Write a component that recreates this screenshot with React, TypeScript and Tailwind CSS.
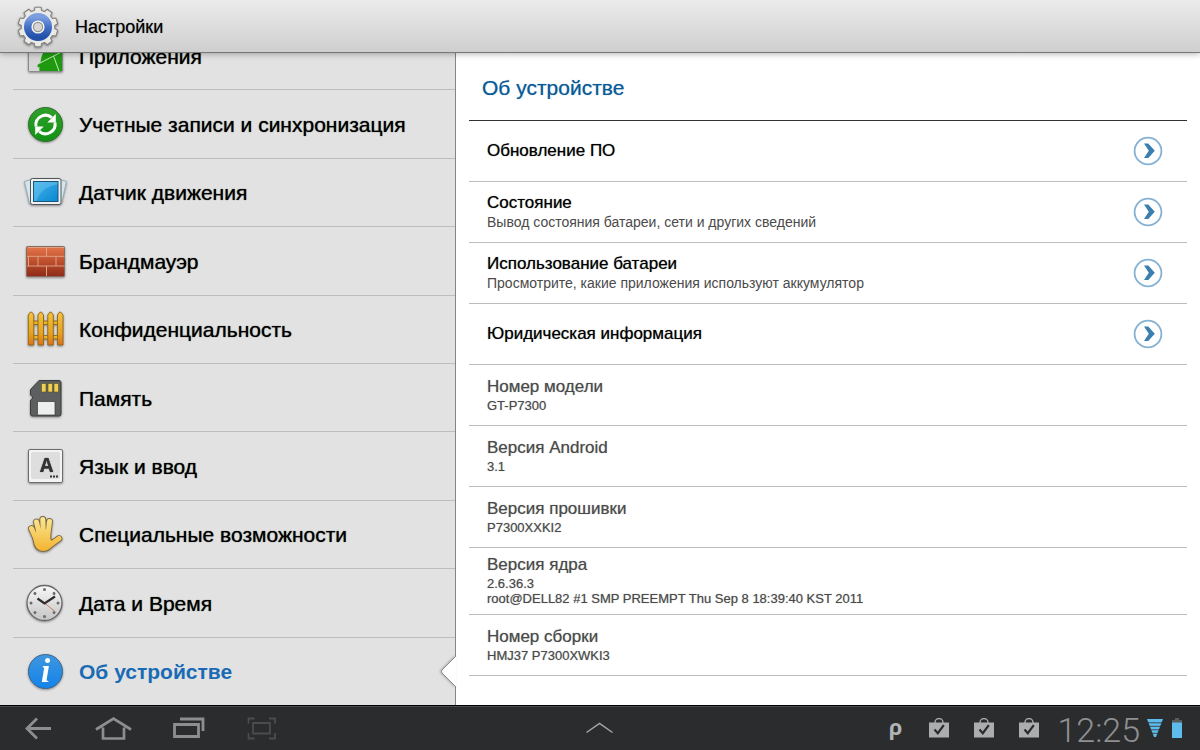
import React from "react";
import clsx from "clsx";

const GEAR_TEETH = 10;

const gearPath = () => {
  const points: string[] = [];
  for (let i = 0; i < GEAR_TEETH; i++) {
    const a = ((i * 360) / GEAR_TEETH - 90) * (Math.PI / 180);
    const corners: [number, number][] = [
      [-0.22, 16.8],
      [-0.15, 20],
      [0.15, 20],
      [0.22, 16.8],
    ];
    corners.forEach(([offset, r]) => {
      points.push(
        `${(22 + r * Math.cos(a + offset)).toFixed(2)},${(22 + r * Math.sin(a + offset)).toFixed(2)}`
      );
    });
  }
  return `M${points.join("L")}Z`;
};

const IconBox = ({ children }: { children: React.ReactNode }) => (
  <svg
    viewBox="0 0 44 44"
    className="h-11 w-11 shrink-0 drop-shadow-[0_1px_1px_rgba(0,0,0,0.4)]"
    aria-hidden="true"
  >
    {children}
  </svg>
);

const GearIcon = () => (
  <IconBox>
    <defs>
      <linearGradient id="gearBlue" x1="0" y1="0" x2="0" y2="1">
        <stop offset="0" stopColor="#7d9fe0" />
        <stop offset="0.5" stopColor="#4470c6" />
        <stop offset="1" stopColor="#2350a8" />
      </linearGradient>
    </defs>
    <path d={gearPath()} fill="#e9e9e6" stroke="#84827e" strokeWidth="1.1" strokeLinejoin="round" />
    <circle cx="22" cy="22" r="10" fill="none" stroke="url(#gearBlue)" strokeWidth="8" />
    <circle cx="22" cy="22" r="5.8" fill="#dcdcda" stroke="#f8f8f6" strokeWidth="1.6" />
    <circle cx="22" cy="22" r="4.6" fill="#d6d6d6" stroke="#97958f" strokeWidth="1.2" />
  </IconBox>
);

const AppsIcon = () => (
  <IconBox>
    <rect x="5.5" y="3.5" width="34" height="34" rx="1" fill="#d6d6d6" stroke="#8a8a8a" />
    <path
      d="M16.5 37c-.3-1.5-.3-3 0-4.300-1.500 1.500-3-.5-1.500-2.200l2.500-1.500c.5-8 4-14.500 10-17.500 4-1.500 8.500-1.500 11.500 1V37z"
      fill="#1f9a10"
    />
    <path d="M17 29 38.500 18M30.500 22 36 37" stroke="#c4ecb4" strokeWidth="1" fill="none" />
  </IconBox>
);

const SyncIcon = () => (
  <IconBox>
    <defs>
      <linearGradient id="syncGreen" x1="0" y1="0" x2="0" y2="1">
        <stop offset="0" stopColor="#2fa02b" />
        <stop offset="1" stopColor="#119312" />
      </linearGradient>
    </defs>
    <circle cx="22.500" cy="22.500" r="17" fill="url(#syncGreen)" stroke="#2f6f2d" />
    <path
      d="M13 24.500a9.600 9.600 0 0 1 15.800-8.800M32 20.500a9.600 9.600 0 0 1-15.800 8.800"
      fill="none"
      stroke="#fff"
      strokeWidth="3"
    />
    <path d="M32.800 12v8.500h-8.500zM12.200 33v-8.500h8.500z" fill="#fff" />
  </IconBox>
);

const MotionIcon = () => (
  <IconBox>
    <defs>
      <linearGradient id="screenBlue" x1="0" y1="0" x2="1" y2="1">
        <stop offset="0" stopColor="#48b5ea" />
        <stop offset="1" stopColor="#0787d2" />
      </linearGradient>
    </defs>
    <path d="M1.500 11.500 9 9.500v24.500l-2.500-.5z" fill="#d3e6ef" stroke="#8fa5b0" strokeWidth="0.8" />
    <path d="M43.500 11.500 36 9.500v24.500l2.500-.5z" fill="#d3e6ef" stroke="#8fa5b0" strokeWidth="0.8" />
    <rect x="7.500" y="8.500" width="30.500" height="26" rx="2" fill="#eef0f1" stroke="#4f5558" />
    <rect x="10.500" y="11.500" width="24.500" height="20" fill="url(#screenBlue)" stroke="#1b5479" />
    <path d="M11 12h23.500v2.500c-11 1.500-18 7-21 16.500H11z" fill="#7bcbf3" opacity="0.4" />
  </IconBox>
);

const FirewallIcon = () => (
  <IconBox>
    <defs>
      <linearGradient id="brick" x1="0" y1="0" x2="0" y2="1">
        <stop offset="0" stopColor="#e5764b" />
        <stop offset="0.5" stopColor="#bd4f2d" />
        <stop offset="1" stopColor="#8d2a18" />
      </linearGradient>
    </defs>
    <rect x="3.500" y="7.500" width="38" height="30" rx="1" fill="url(#brick)" stroke="#8a6a5c" />
    <path
      d="M4 17.300h37.500M4 27h37.500M23.500 8v9M5.500 17.500V27M15 17.500V27M33 17.500V27M23.500 27v10M5 8.500h36"
      stroke="#dfa084"
      strokeWidth="1"
    />
  </IconBox>
);

const FenceIcon = () => (
  <IconBox>
    <defs>
      <linearGradient id="fence" x1="0" y1="0" x2="0" y2="1">
        <stop offset="0" stopColor="#f3c43a" />
        <stop offset="0.65" stopColor="#e5a11f" />
        <stop offset="1" stopColor="#dc7317" />
      </linearGradient>
    </defs>
    <rect x="6" y="14" width="33" height="3.500" fill="#e8b52b" stroke="#7b6114" strokeWidth="0.800" />
    <rect x="6" y="28.500" width="33" height="3.500" fill="#e8b52b" stroke="#7b6114" strokeWidth="0.800" />
    {[5.3, 15, 24.8, 34.5].map((x) => (
      <path
        key={x}
        transform={`translate(${x} 0)`}
        d="M0 8 2 5.200h1.500L5.500 8v30H0z"
        fill="url(#fence)"
        stroke="#94641b"
        strokeWidth="0.900"
        strokeLinejoin="round"
      />
    ))}
  </IconBox>
);

const MemoryIcon = () => (
  <IconBox>
    <path
      d="M16 4.500h20a2 2 0 0 1 2 2V38a2 2 0 0 1-2 2H9.500a2 2 0 0 1-2-2V24l2-1.500v-2l-2-1.500v-5.500z"
      fill="#5d5e60"
      stroke="#3c3d3f"
    />
    <path d="M18.500 7.500h4.500v8.500h-4.500zM25 7.500h4.500v8.500H25zM31 7.500h4.500v8.500H31z" fill="#f0cf53" stroke="#58501f" strokeWidth="0.600" />
    <path d="M14.500 25.500h17.500v13.500H14.500z" fill="#eee" stroke="#38393a" strokeWidth="0.700" />
  </IconBox>
);

const KeyboardIcon = () => (
  <IconBox>
    <rect x="5.500" y="5.500" width="34" height="33" rx="1.500" fill="#f3f3f3" stroke="#6c6c6c" />
    <rect x="8" y="8" width="29" height="27" rx="2" fill="#dedede" />
    <text x="23.500" y="28" textAnchor="middle" fontSize="19" fontWeight="700" fill="#333" fontFamily="Open Sans, sans-serif">
      A
    </text>
    <path d="M27 32.500h2M30 32.500h2M33 32.500h2" stroke="#333" strokeWidth="1.800" />
  </IconBox>
);

const HAND = "M8.500 16.500 13.500 28M13.500 10 17 25M19.800 7.500 20.500 25M26.500 9.500 24.500 26M36 26.500 27 33";
const PALM = "M10.500 25 14 18H26.500L27.500 27.500 30.500 31Q27 39 20 39 12 38.500 10.800 29Z";

const HandIcon = () => (
  <IconBox>
    <defs>
      <linearGradient id="hand" gradientUnits="userSpaceOnUse" x1="0" y1="5" x2="0" y2="40">
        <stop offset="0" stopColor="#fae893" />
        <stop offset="1" stopColor="#f3b22d" />
      </linearGradient>
    </defs>
    <path d={HAND} stroke="#7c6a45" strokeWidth="6.800" strokeLinecap="round" fill="none" />
    <path d={PALM} fill="#f3bd3f" stroke="#7c6a45" strokeWidth="2.200" strokeLinejoin="round" />
    <path d={HAND} stroke="url(#hand)" strokeWidth="5" strokeLinecap="round" fill="none" />
    <path d={PALM} fill="url(#hand)" />
  </IconBox>
);

const ClockIcon = () => (
  <IconBox>
    <defs>
      <linearGradient id="clockFace" x1="0" y1="0" x2="0" y2="1">
        <stop offset="0" stopColor="#f8f8f8" />
        <stop offset="1" stopColor="#c4c4c4" />
      </linearGradient>
    </defs>
    <circle cx="21.500" cy="22" r="17.500" fill="url(#clockFace)" stroke="#686868" strokeWidth="1.300" />
    {[0, 45, 90, 135, 180, 225, 270, 315].map((deg) => (
      <circle key={deg} cx="21.500" cy="8.500" r="1.500" fill="#6b6b6b" transform={`rotate(${deg} 21.500 22)`} />
    ))}
    <path d="m21.500 22 10.500 8.500" stroke="#c77462" strokeWidth="0.900" />
    <path d="m14.500 17.500 7 5 10.500-7" fill="none" stroke="#2d2d2d" strokeWidth="2.200" />
  </IconBox>
);

const InfoIcon = () => (
  <IconBox>
    <defs>
      <linearGradient id="infoBlue" x1="0" y1="0" x2="0" y2="1">
        <stop offset="0" stopColor="#3f97dd" />
        <stop offset="1" stopColor="#1383ea" />
      </linearGradient>
    </defs>
    <circle cx="22.500" cy="22.500" r="17" fill="url(#infoBlue)" stroke="#3b668f" />
    <text
      x="22.500"
      y="33"
      textAnchor="middle"
      fontSize="33"
      fontStyle="italic"
      fontWeight="700"
      fill="#fff"
      fontFamily="Liberation Serif, serif"
    >
      i
    </text>
  </IconBox>
);

const ArrowIcon = () => (
  <svg viewBox="0 0 30 30" className="h-[30px] w-[30px] shrink-0" aria-hidden="true">
    <circle cx="15" cy="15" r="13.400" fill="#fff" stroke="#85b1d3" strokeWidth="1.800" />
    <path d="M11 7.500h4.300l6.500 7.200-6.500 7.300H11l4.800-7.300z" fill="#3a7fb0" />
  </svg>
);

const menu = [
  { label: "Приложения", Icon: AppsIcon },
  { label: "Учетные записи и синхронизация", Icon: SyncIcon },
  { label: "Датчик движения", Icon: MotionIcon },
  { label: "Брандмауэр", Icon: FirewallIcon },
  { label: "Конфиденциальность", Icon: FenceIcon },
  { label: "Память", Icon: MemoryIcon },
  { label: "Язык и ввод", Icon: KeyboardIcon },
  { label: "Специальные возможности", Icon: HandIcon },
  { label: "Дата и Время", Icon: ClockIcon },
  { label: "Об устройстве", Icon: InfoIcon, active: true },
];

const links = [
  { title: "Обновление ПО" },
  { title: "Состояние", text: "Вывод состояния батареи, сети и других сведений" },
  { title: "Использование батареи", text: "Просмотрите, какие приложения используют аккумулятор" },
  { title: "Юридическая информация" },
];

const details = [
  { title: "Номер модели", lines: ["GT-P7300"] },
  { title: "Версия Android", lines: ["3.1"] },
  { title: "Версия прошивки", lines: ["P7300XXKI2"] },
  {
    title: "Версия ядра",
    lines: ["2.6.36.3", "root@DELL82 #1 SMP PREEMPT Thu Sep 8 18:39:40 KST 2011"],
  },
  { title: "Номер сборки", lines: ["HMJ37 P7300XWKI3"] },
];

const BagIcon = () => (
  <svg viewBox="0 0 20 20" className="h-5 w-5" aria-hidden="true">
    <path d="M6 5V4.500a4 4 0 0 1 8 0V5" fill="none" stroke="#a9abac" strokeWidth="1.400" />
    <path d="M0 4.500h20v15H0z" fill="#abadae" />
    <path d="m5.500 11.500 3.300 3.700 6-8" fill="none" stroke="#2a2b2d" strokeWidth="2.200" />
  </svg>
);

const App = () => {
  return (
    <div className="flex h-screen flex-col overflow-hidden bg-white font-['Liberation_Sans',sans-serif] text-black">
      <header className="relative z-10 flex h-[53px] shrink-0 items-center gap-[15px] border-b border-[#777] bg-linear-to-b from-[#ebebeb] to-[#cfcfcf] pt-[2px] pl-4 shadow-[0_1px_6px_rgba(0,0,0,0.3)]">
        <GearIcon />
        <h1 className="text-[18px] leading-5 text-shadow-[0_0_1px_rgba(0,0,0,0.5)]">Настройки</h1>
      </header>

      <div className="flex min-h-0 flex-1">
        <nav className="flex w-[38%] shrink-0 flex-col justify-end border-r border-[#858585] bg-[#e2e2e2]">
          <ul className="ml-[13px] grid h-[684px] shrink-0 grid-rows-10">
            {menu.map(({ label, Icon, active }) => (
              <li key={label} className="relative border-t border-[#bdbdbd]">
                <a
                  href="#"
                  className={clsx(
                    "flex h-full items-center gap-3 pl-[10px] text-[21px] leading-6",
                    active
                      ? "font-bold text-[#1a6bb5]"
                      : "text-black text-shadow-[0_0_1px_rgba(0,0,0,0.8)]"
                  )}
                >
                  <Icon />
                  <span className="pt-[2px]">{label}</span>
                </a>
                {active && (
                  <svg
                    viewBox="0 0 16 32"
                    className="absolute top-[18px] -right-px h-8 w-4 drop-shadow-[-1px_0_1px_rgba(0,0,0,0.25)]"
                    aria-hidden="true"
                  >
                    <path d="M16 0 2 14q-1 1.500 0 3L16 31" fill="#fff" stroke="#8a8a8a" />
                  </svg>
                )}
              </li>
            ))}
          </ul>
        </nav>

        <main className="min-w-0 flex-1 bg-white px-[13px]">
          <h2 className="border-b border-[#333] pt-[23px] pb-5 pl-[13px] text-[21px] leading-6 text-[#0a5a96] text-shadow-[0_0_1px_rgba(10,90,150,0.6)]">
            Об устройстве
          </h2>
          <ul>
            {links.map(({ title, text }) => (
              <li key={title} className="border-b border-[#bcbcbc]">
                <button
                  type="button"
                  className="flex min-h-[60px] w-full items-center justify-between pr-6 pl-[18px] text-left text-shadow-[0_0_1px_rgba(0,0,0,0.6)]"
                >
                  <span>
                    <span className="block text-[17px] leading-[22px]">{title}</span>
                    {text && (
                      <span className="block pb-[2px] text-[14px] leading-4 text-[#4a4a4a] text-shadow-none">{text}</span>
                    )}
                  </span>
                  <ArrowIcon />
                </button>
              </li>
            ))}
            {details.map(({ title, lines }) => (
              <li
                key={title}
                className="flex min-h-[61px] flex-col justify-center border-b border-[#bcbcbc] pt-[6px] pb-2 pl-[18px] text-[#4a4a4a] text-shadow-[0_0_1px_rgba(60,60,60,0.5)]"
              >
                <h3 className="text-[17px] leading-[22px]">{title}</h3>
                {lines.map((line) => (
                  <p key={line} className="text-[13px] leading-[15px]">
                    {line}
                  </p>
                ))}
              </li>
            ))}
          </ul>
        </main>
      </div>

      <footer className="relative z-10 grid h-[45px] shrink-0 grid-cols-[1fr_auto_1fr] items-center border-t border-black bg-[#2b2c2e] inset-shadow-[0_1px_0_#4a4b4d]">
        <div className="flex items-center gap-[35px] pl-5 text-[#8d8e90]">
          <button type="button" aria-label="Назад">
            <svg viewBox="0 0 40 28" className="h-7 w-10" fill="none" stroke="currentColor" strokeWidth="2.800">
              <path d="M31 14.500H7M17 4.500l-10 10 10 10" />
            </svg>
          </button>
          <button type="button" aria-label="Домой">
            <svg viewBox="0 0 40 28" className="h-7 w-10" fill="none" stroke="currentColor" strokeWidth="2.700">
              <path d="M1 15.500 18.500 4.500l17.500 11M8 13.500v11h21v-11" />
            </svg>
          </button>
          <button type="button" aria-label="Недавние приложения">
            <svg viewBox="0 0 40 28" className="h-7 w-10" fill="none" stroke="currentColor" strokeWidth="2.800">
              <path d="M4.500 10.500h24v12h-24zM10 5h23v12" />
            </svg>
          </button>
          <button type="button" aria-label="Снимок экрана" className="text-[#4b4c4e]">
            <svg viewBox="0 0 40 28" className="h-7 w-10" fill="none" stroke="currentColor" strokeWidth="1.800">
              <path d="M8 9h17v10.500H8zM9.500 4.500h-6v5M24 4.500h6v5M30 19v5.500h-6M9.500 24.500h-6V19" />
            </svg>
          </button>
        </div>

        <button type="button" aria-label="Развернуть панель">
          <svg viewBox="0 0 30 14" className="h-[14px] w-[30px]" fill="none" stroke="#a5a6a7" strokeWidth="1.500">
            <path d="m1.500 11.500 13-9 13 9" />
          </svg>
        </button>

        <div className="flex items-center justify-end pr-[18px] text-[#8f9092]">
          <span className="mr-[27px] pb-1 font-['Open_Sans',sans-serif] text-[22px] leading-8 font-bold text-[#b1b3b4]">ρ</span>
          <div className="mr-[18px] flex gap-[25px]">
            <BagIcon />
            <BagIcon />
            <BagIcon />
          </div>
          <time className="pt-1 pr-px font-['Roboto',sans-serif] text-[34px] leading-8 font-light">12:25</time>
          <svg viewBox="0 0 16 20" className="ml-1.5 h-5 w-4" aria-hidden="true">
            <path d="M0 1h16L9 19H7z" fill="#5dbcec" />
            <path d="M0 4.800h16M0 8.300h16M0 11.800h16M4 15.300h8" stroke="#2b2c2e" strokeWidth="0.800" />
          </svg>
          <svg viewBox="0 0 10 20" className="ml-[9px] h-5 w-[10px]" aria-hidden="true">
            <path d="M3 0h4v2H3zM0 2h10v3H0z" fill="#5a5b5d" />
            <path d="M0 4.500h10V20H0z" fill="#5dbcec" />
          </svg>
        </div>
      </footer>
    </div>
  );
};

export default App;
